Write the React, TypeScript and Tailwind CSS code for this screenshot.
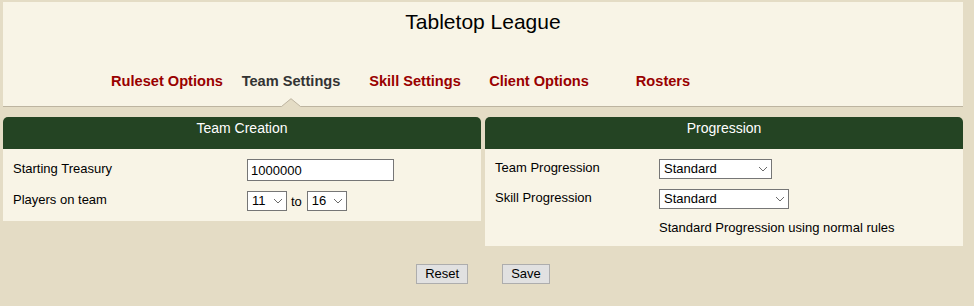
import React from 'react';

const tabs = [
  { label: 'Ruleset Options', active: false },
  { label: 'Team Settings', active: true },
  { label: 'Skill Settings', active: false },
  { label: 'Client Options', active: false },
  { label: 'Rosters', active: false },
];

const Chevron = () => (
  <svg
    className="pointer-events-none absolute right-[4px] top-1/2 -translate-y-1/2"
    width="10"
    height="6"
    viewBox="0 0 10 6"
    fill="none"
  >
    <path d="M1 1l4 4 4-4" stroke="#6b6b6b" strokeWidth="1" />
  </svg>
);

const Select: React.FC<{ value: string; options: string[]; width: string }> = ({ value, options, width }) => (
  <div className={`relative h-[20px] ${width}`}>
    <select
      defaultValue={value}
      className="h-full w-full appearance-none border border-[#767676] bg-white pl-[4px] pr-[16px] text-[13px] leading-[18px] text-black outline-none"
    >
      {options.map((o) => (
        <option key={o}>{o}</option>
      ))}
    </select>
    <Chevron />
  </div>
);

const Panel: React.FC<{ title: string; children: React.ReactNode }> = ({ title, children }) => (
  <div className="w-[478px]">
    <div className="h-[32px] rounded-t-[5px] bg-[#244423] pt-[3px] text-center text-[14px] leading-[16px] text-white">
      {title}
    </div>
    <div className="bg-[#f8f4e6] px-[10px]">{children}</div>
  </div>
);

export default function App() {
  return (
    <div className="min-h-[306px] bg-[#e4dcc5] pt-[2px] font-['Liberation_Sans',Arial,sans-serif] text-black">
      <div className="ml-[3px] w-[960px]">
        {/* Header */}
        <header className="border-b border-[#bdb4a0] bg-[#f8f4e6] pt-[8px] pb-[17px]">
          <h1 className="text-center text-[21px] leading-[23px]">Tabletop League</h1>
          <nav className="mt-[40px] flex pl-[102px]">
            {tabs.map((t) => (
              <div
                key={t.label}
                className={`relative w-[124px] text-center text-[14.6px] font-bold leading-[16px] ${
                  t.active ? 'text-[#333333]' : 'text-[#990000]'
                }`}
              >
                {t.label}
                {t.active && (
                  <svg
                    className="absolute left-1/2 top-[25px] -translate-x-1/2"
                    width="20"
                    height="9"
                    viewBox="0 0 20 9"
                  >
                    <polygon points="0,9 10,0.5 20,9" fill="#e4dcc5" />
                    <path d="M0.5 8.5L10 0.7L19.5 8.5" fill="none" stroke="#bdb4a0" strokeWidth="1" />
                  </svg>
                )}
              </div>
            ))}
          </nav>
        </header>

        {/* Panels */}
        <div className="mt-[10px] flex items-start gap-[4px]">
          <Panel title="Team Creation">
            <div className="grid grid-cols-[234px_1fr] gap-y-[10px] pt-[10px] pb-[10px] text-[13px]">
              <div className="pt-[2px] leading-[15px]">Starting Treasury</div>
              <input
                defaultValue="1000000"
                className="h-[22px] w-[147px] border border-[#767676] bg-white px-[3px] text-[13px] outline-none"
              />
              <div className="pt-[1px] leading-[15px]">Players on team</div>
              <div className="flex items-center">
                <Select value="11" options={['11', '12', '13', '14', '15', '16']} width="w-[40px]" />
                <span className="ml-[4px] mr-[5px] leading-[15px]">to</span>
                <Select value="16" options={['11', '12', '13', '14', '15', '16']} width="w-[40px]" />
              </div>
            </div>
          </Panel>
          <Panel title="Progression">
            <div className="grid grid-cols-[164px_1fr] pt-[10px] pb-[11px] text-[13px]">
              <div className="pt-[1px] leading-[15px]">Team Progression</div>
              <Select value="Standard" options={['Standard', 'None']} width="w-[113px]" />
              <div className="mt-[10px] pt-[1px] leading-[15px]">Skill Progression</div>
              <div className="mt-[10px]">
                <Select value="Standard" options={['Standard', 'Random']} width="w-[130px]" />
              </div>
              <div />
              <div className="mt-[11px] leading-[15px]">Standard Progression using normal rules</div>
            </div>
          </Panel>
        </div>

        {/* Actions */}
        <div className="mt-[18px] flex justify-center gap-[34px]">
          <button className="h-[20px] border border-[#adadad] bg-[#e1e1e1] px-[8px] text-[13px] leading-[18px]">
            Reset
          </button>
          <button className="h-[20px] border border-[#adadad] bg-[#e1e1e1] px-[8px] text-[13px] leading-[18px]">
            Save
          </button>
        </div>
      </div>
    </div>
  );
}
